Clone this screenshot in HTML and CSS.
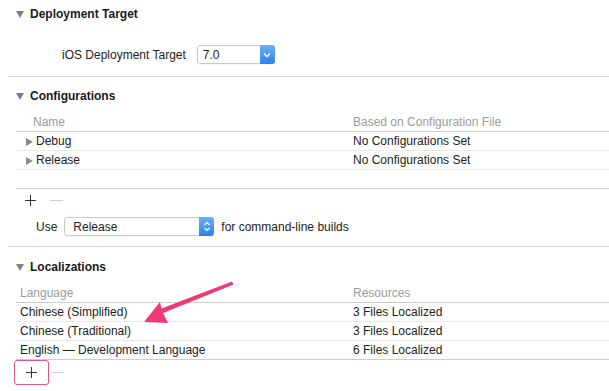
FILE: index.html
```html
<!DOCTYPE html>
<html lang="en">
<head>
  <meta charset="UTF-8">
  <title>Project Info</title>
  <link rel="stylesheet" href="styles.css">
</head>
<body>
  <div class="editor">
    <section class="section">
      <div class="section-title"><span class="disclosure-down"></span>Deployment Target</div>
      <div class="deploy-row">
        <span class="label">iOS Deployment Target</span>
        <div class="popup popup-short">
          <span class="popup-value">7.0</span>
          <span class="popup-btn">
            <svg width="8" height="6" viewBox="0 0 8 6"><path d="M1 1.5 L4 4.5 L7 1.5" fill="none" stroke="#fff" stroke-width="1.4"/></svg>
          </span>
        </div>
      </div>
    </section>

    <section class="section">
      <div class="section-title"><span class="disclosure-down"></span>Configurations</div>
      <div class="table config-table">
        <div class="row head"><span class="cell first">Name</span><span class="cell">Based on Configuration File</span></div>
        <div class="row"><span class="cell first"><span class="disclosure-right"></span>Debug</span><span class="cell">No Configurations Set</span></div>
        <div class="row"><span class="cell first"><span class="disclosure-right"></span>Release</span><span class="cell">No Configurations Set</span></div>
        <div class="row last"><span class="cell first"></span><span class="cell"></span></div>
      </div>
      <div class="add-remove">
        <span class="tool-btn">
          <svg width="11" height="11" viewBox="0 0 11 11"><path d="M5.5 0 V11 M0 5.5 H11" stroke="#333" stroke-width="1"/></svg>
        </span>
        <span class="tool-btn">
          <svg width="13" height="11" viewBox="0 0 13 11"><path d="M0 5.5 H13" stroke="#cfcfcf" stroke-width="1"/></svg>
        </span>
      </div>
      <div class="use-row">
        <span class="label">Use</span>
        <div class="popup popup-long">
          <span class="popup-value">Release</span>
          <span class="popup-btn">
            <svg width="8" height="11" viewBox="0 0 8 11"><path d="M1.5 4 L4 1.5 L6.5 4 M1.5 7 L4 9.5 L6.5 7" fill="none" stroke="#fff" stroke-width="1.2"/></svg>
          </span>
        </div>
        <span class="label">for command-line builds</span>
      </div>
    </section>

    <section class="section">
      <div class="section-title"><span class="disclosure-down"></span>Localizations</div>
      <div class="table loc-table">
        <div class="row head"><span class="cell first">Language</span><span class="cell">Resources</span></div>
        <div class="row"><span class="cell first">Chinese (Simplified)</span><span class="cell">3 Files Localized</span></div>
        <div class="row"><span class="cell first">Chinese (Traditional)</span><span class="cell">3 Files Localized</span></div>
        <div class="row last"><span class="cell first">English — Development Language</span><span class="cell">6 Files Localized</span></div>
      </div>
      <div class="add-remove loc-tools">
        <span class="tool-btn highlighted">
          <svg width="11" height="11" viewBox="0 0 11 11"><path d="M5.5 0 V11 M0 5.5 H11" stroke="#333" stroke-width="1"/></svg>
        </span>
        <span class="tool-btn">
          <svg width="13" height="11" viewBox="0 0 13 11"><path d="M0 5.5 H13" stroke="#cfcfcf" stroke-width="1"/></svg>
        </span>
      </div>
    </section>

    <svg class="callout-arrow" width="609" height="391" viewBox="0 0 609 391">
      <path d="M232 281.5 L233.5 284.5 L163 313 L168 323 L144 322 L160 302 L161.5 308.5 Z" fill="#f03a73"/>
    </svg>
  </div>
</body>
</html>
```

FILE: styles.css
```css
body {
  margin: 0;
  background: #fff;
  font-family: 'Liberation Sans', Arial, sans-serif;
  font-size: 12px;
  color: #222;
}

.editor {
  position: relative;
  width: 609px;
  height: 391px;
  overflow: hidden;
}

.section {
  margin-left: 8px;
  border-bottom: 1px solid #d4d4d4;
}

.section:last-of-type {
  border-bottom: none;
}

.section-title {
  display: flex;
  align-items: center;
  height: 16px;
  padding: 11px 0 9px 8px;
  font-weight: bold;
  color: #1a1a1a;
}

.section:first-child .section-title {
  padding-top: 6px;
  padding-bottom: 6px;
}

.section:last-of-type .section-title {
  padding-top: 12px;
}

.disclosure-down {
  width: 0;
  height: 0;
  border-left: 4px solid transparent;
  border-right: 4px solid transparent;
  border-top: 7px solid #808080;
  margin-right: 6px;
}

.disclosure-right {
  display: inline-block;
  width: 0;
  height: 0;
  border-top: 4px solid transparent;
  border-bottom: 4px solid transparent;
  border-left: 7px solid #8a8a8a;
  margin-right: 3px;
  vertical-align: -1px;
}

.deploy-row {
  display: flex;
  align-items: center;
  gap: 11px;
  padding: 17px 0 12px 54px;
}

.popup {
  display: flex;
  align-items: stretch;
  height: 17px;
  border: 1px solid #c9c9c9;
  border-radius: 3px;
  background: #fff;
  box-shadow: 0 1px 0 rgba(0, 0, 0, 0.04);
}

.popup-short {
  width: 76px;
}

.popup-long {
  width: 148px;
}

.popup-value {
  flex: 1;
  display: flex;
  align-items: center;
  padding-left: 5px;
}

.popup-long .popup-value {
  padding-left: 8px;
}

.popup-btn {
  display: flex;
  align-items: center;
  justify-content: center;
  width: 15px;
  margin: -1px -1px -1px 0;
  border-radius: 0 3px 3px 0;
  background: linear-gradient(#6cb0f7, #2d80ef);
}

.table {
  margin-left: 8px;
}

.row {
  display: grid;
  grid-template-columns: 337px 1fr;
  align-items: center;
  height: 18px;
  border-bottom: 1px solid #e9e9e9;
}

.row.head {
  color: #9b9b9b;
  border-bottom-color: #cdcdcd;
}

.row.last {
  border-bottom-color: #cdcdcd;
}

.config-table .cell.first {
  padding-left: 10px;
}

.config-table .head .cell.first {
  padding-left: 17px;
}

.loc-table .cell.first {
  padding-left: 4px;
}

.add-remove {
  display: flex;
  align-items: center;
  gap: 14px;
  height: 22px;
  padding-left: 17px;
}

.loc-tools {
  padding-left: 18px;
  height: 24px;
}

.tool-btn {
  display: flex;
  align-items: center;
  justify-content: center;
  height: 11px;
}

.highlighted {
  outline: 1.5px solid #e0578a;
  outline-offset: 0;
  padding: 6px 11px;
  margin: 0 -11px;
  border-radius: 2px;
}

.use-row {
  display: flex;
  align-items: center;
  gap: 7px;
  padding: 6px 0 10px 28px;
}

.callout-arrow {
  position: absolute;
  left: 0;
  top: 0;
  pointer-events: none;
}
```
